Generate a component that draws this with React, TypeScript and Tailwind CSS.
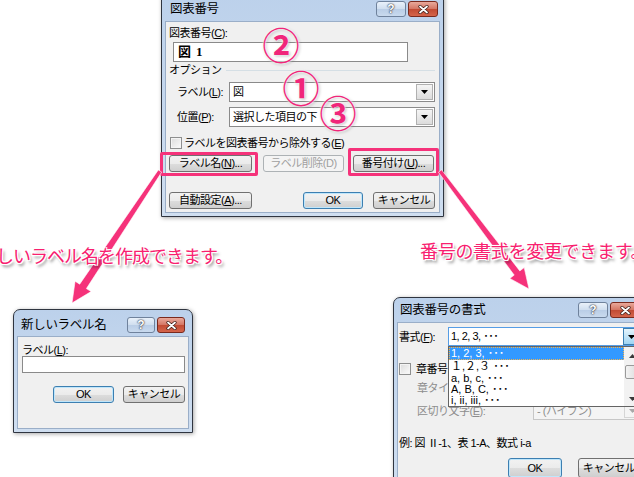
import React from 'react';

const FONT = "font-['Liberation_Sans','Noto_Sans_CJK_JP',sans-serif]";
const BTN_BG = 'bg-[linear-gradient(#f2f2f2_0%,#ebebeb_50%,#dddddd_51%,#cfcfcf_100%)]';

function HelpBtn({ className = '' }: { className?: string }) {
  return (
    <div
      className={`flex h-[16px] items-center justify-center rounded-[3px] border border-[#6f829c] bg-[linear-gradient(#e9f1fa_0%,#cfdeef_50%,#b9cde6_51%,#c9daee_100%)] text-[12px] font-bold leading-none text-white [text-shadow:0_0_1px_#223,0_0_2px_#223] ${className}`}
    >
      ?
    </div>
  );
}

function CloseBtn({ className = '' }: { className?: string }) {
  return (
    <div
      className={`flex h-[16px] items-center justify-center rounded-[3px] border border-[#7a2a1e] bg-[linear-gradient(#e9a99b_0%,#d47563_50%,#c14a33_51%,#d5654b_100%)] ${className}`}
    >
      <svg width="11" height="9" viewBox="0 0 11 9">
        <path d="M2 1.5 L9 7.5 M9 1.5 L2 7.5" stroke="#3a1a14" strokeWidth="3.2" strokeLinecap="round" />
        <path d="M2 1.5 L9 7.5 M9 1.5 L2 7.5" stroke="#fff" strokeWidth="1.8" strokeLinecap="round" />
      </svg>
    </div>
  );
}

function Dialog({
  title,
  className,
  barClass,
  btnClass,
  children,
}: {
  title: string;
  className: string;
  barClass: string;
  btnClass: string;
  children: React.ReactNode;
}) {
  return (
    <div
      className={`absolute flex flex-col rounded-t-[7px] border border-[#2f3540] bg-linear-to-b from-[#bcd1eb] to-[#cfdef0] px-[3px] pb-[3px] shadow-[1px_1px_4px_rgba(0,0,0,0.35)] ${className}`}
    >
      <div className={`flex shrink-0 items-end justify-between ${barClass}`}>
        <span className="text-[12.5px] leading-[16px] tracking-[-0.3px] text-black">{title}</span>
        <div className="flex gap-[2px]">
          <HelpBtn className={btnClass} />
          <CloseBtn className={btnClass} />
        </div>
      </div>
      <div className="relative flex-1 border border-[#9aaec8] bg-[#f0f0f0] tracking-[-0.5px]">{children}</div>
    </div>
  );
}

function Btn({
  children,
  className = '',
  def = false,
  disabled = false,
}: {
  children: React.ReactNode;
  className?: string;
  def?: boolean;
  disabled?: boolean;
}) {
  const look = disabled
    ? 'border-[#adb2b5] bg-[#f4f4f4] text-[#a0a0a0]'
    : def
      ? `border-[#3c7fb1] ${BTN_BG} shadow-[inset_0_0_0_1px_#bfe6fb]`
      : `border-[#707070] ${BTN_BG}`;
  return (
    <div
      className={`flex h-[17px] shrink-0 items-center justify-center rounded-[3px] border text-[11px] leading-none ${look} ${className}`}
    >
      {children}
    </div>
  );
}

function Arrow({ disabled = false }: { disabled?: boolean }) {
  return (
    <svg width="7" height="4" viewBox="0 0 7 4">
      <path d="M0 0 H7 L3.5 4 Z" fill={disabled ? '#a8a8a8' : '#000'} />
    </svg>
  );
}

function Combo({ text, className = '' }: { text: string; className?: string }) {
  return (
    <div className={`flex h-[20px] items-center border border-[#8a8a8a] bg-white ${className}`}>
      <span className="flex-1 pl-[3px] text-[11px] leading-none">{text}</span>
      <div className="mr-px flex h-[16px] w-[17px] items-center justify-center border border-[#b0b0b0] bg-linear-to-b from-[#f5f5f5] to-[#dcdcdc]">
        <Arrow />
      </div>
    </div>
  );
}

function Check() {
  return <div className="h-[12px] w-[12px] shrink-0 border border-[#8e8f8f] bg-linear-to-br from-[#dcdcdc] to-[#fbfbfb] shadow-[inset_0_0_0_1px_#f4f4f4]" />;
}

function Circled({ ch, className }: { ch: string; className: string }) {
  return (
    <span
      className={`absolute flex h-[40px] w-[40px] items-center justify-center text-[37px] font-bold leading-none text-[#f0267a] [text-shadow:0_0_2px_#fff,0_0_3px_#fff,1px_1px_3px_rgba(0,0,0,0.35)] ${className}`}
    >
      {ch}
    </span>
  );
}

const NOTE =
  'absolute whitespace-nowrap text-[18px] leading-none text-[#f8206f] [text-shadow:-1px_-1px_0_#fff,1px_-1px_0_#fff,-1px_1px_0_#fff,1px_1px_0_#fff,0_0_2px_#fff,2px_3px_3px_rgba(0,0,0,0.5)]';

export default function App() {
  return (
    <div className={`relative h-[477px] w-[634px] overflow-hidden bg-white text-black ${FONT}`}>
      {/* 図表番号 main dialog */}
      <Dialog
        title="図表番号"
        className="left-[161px] top-[-8px] h-[225px] w-[283px]"
        barClass="h-[28px] pb-[4px] pl-[5px] pr-[2px]"
        btnClass="w-[30px]"
      >
        <div className="flex flex-col pl-[3px] pt-[5px] text-[11px]">
          <div className="h-[12px] leading-[12px]">
            図表番号(<u>C</u>):
          </div>
          <div className="ml-[4px] mt-[3px] flex h-[20px] w-[235px] items-center border border-[#8a8a8a] bg-white pl-[4px] font-['Liberation_Serif','Noto_Sans_CJK_JP',serif] text-[13px] font-bold">
            図&nbsp;&nbsp;1
          </div>
          <div className="mt-[2px] flex h-[12px] items-center pr-[4px]">
            <span className="leading-[12px]">オプション</span>
            <div className="ml-[4px] h-px flex-1 bg-[#d5dfe5]" />
          </div>
          <div className="mt-[6px] flex items-center">
            <span className="ml-[8px] w-[52px] leading-[12px]">
              ラベル(<u>L</u>):
            </span>
            <Combo text="図" className="w-[206px]" />
          </div>
          <div className="mt-[5px] flex items-center">
            <span className="ml-[8px] w-[52px] leading-[12px]">
              位置(<u>P</u>):
            </span>
            <Combo text="選択した項目の下" className="w-[206px]" />
          </div>
          <div className="mt-[9px] flex h-[13px] items-center gap-[2px] pl-[1px]">
            <Check />
            <span className="leading-[12px]">
              ラベルを図表番号から除外する(<u>E</u>)
            </span>
          </div>
          <div className="mt-[6px] flex">
            <Btn className="w-[83px]">
              ラベル名(<u>N</u>)...
            </Btn>
            <Btn className="ml-[11px] w-[81px]" disabled>
              ラベル削除(D)
            </Btn>
            <Btn className="ml-[9px] w-[81px]">
              番号付け(<u>U</u>)...
            </Btn>
          </div>
          <div className="mt-[20px] flex">
            <Btn className="w-[83px]">
              自動設定(<u>A</u>)...
            </Btn>
            <Btn className="ml-[51px] w-[60px]" def>
              OK
            </Btn>
            <Btn className="ml-[10px] w-[62px]">キャンセル</Btn>
          </div>
        </div>
      </Dialog>

      {/* 新しいラベル名 dialog */}
      <Dialog
        title="新しいラベル名"
        className="left-[13px] top-[309px] h-[124px] w-[180px]"
        barClass="h-[26px] pb-[3px] pl-[4px] pr-[4px]"
        btnClass="w-[28px] h-[15px]"
      >
        <div className="flex flex-col pl-[4px] pt-[7px] text-[11px]">
          <div className="h-[12px] leading-[12px]">
            ラベル(<u>L</u>):
          </div>
          <div className="h-[17px] w-[163px] border border-[#8a8a8a] bg-white" />
          <div className="mt-[13px] flex">
            <Btn className="ml-[31px] w-[61px]" def>
              OK
            </Btn>
            <Btn className="ml-[9px] w-[62px]">キャンセル</Btn>
          </div>
        </div>
      </Dialog>

      {/* 図表番号の書式 dialog */}
      <Dialog
        title="図表番号の書式"
        className="left-[393px] top-[297px] h-[200px] w-[255px]"
        barClass="h-[24px] pb-[4px] pl-[3px] pr-[4px]"
        btnClass="w-[30px] h-[15px]"
      >
        <div className="flex flex-col whitespace-nowrap pl-[1px] pt-[4px] text-[11px]">
          <div className="flex items-center">
            <span className="w-[49px] leading-[12px]">
              書式(<u>F</u>):
            </span>
            <div className="flex h-[19px] w-[193px] items-center border border-[#569de5] bg-white">
              <span className="flex-1 pl-[2px] leading-none">1, 2, 3, ･･･</span>
              <div className="flex h-[17px] w-[17px] items-center justify-center border border-[#3c7fb1] bg-linear-to-b from-[#e5f4fc] to-[#9fd5f3]">
                <Arrow />
              </div>
            </div>
          </div>
          <div className="mt-[17px] flex h-[12px] items-center gap-[5px]">
            <Check />
            <span className="leading-[12px]">
              章番号を含める(<u>N</u>)
            </span>
          </div>
          <div className="mt-[4px] flex items-center text-[#8d8d8d]">
            <span className="ml-[18px] w-[116px] leading-[12px]">章タイトルのスタイル(P):</span>
            <div className="flex h-[18px] w-[110px] items-center border border-[#c7c7c7] bg-[#f4f4f4]">
              <span className="flex-1 pl-[3px]">見出し 1</span>
            </div>
          </div>
          <div className="mt-[5px] flex items-center text-[#8d8d8d]">
            <span className="ml-[18px] w-[116px] leading-[12px]">
              区切り文字(<u>E</u>):
            </span>
            <div className="flex h-[18px] w-[110px] items-center border border-[#c7c7c7] bg-[#f4f4f4]">
              <span className="flex-1 pl-[3px]">- (ハイフン)</span>
              <div className="mr-px flex h-[14px] w-[17px] items-center justify-center border border-[#d5d5d5] bg-[#f4f4f4]">
                <Arrow disabled />
              </div>
            </div>
          </div>
          <div className="mt-[17px] h-[12px] leading-[12px]">例: 図 Ⅱ-1、表 1-A、数式 i-a</div>
          <div className="mt-[9px] flex">
            <Btn className="ml-[109px] h-[20px] w-[54px]" def>
              OK
            </Btn>
            <Btn className="ml-[16px] h-[20px] w-[62px]">キャンセル</Btn>
          </div>
        </div>

        {/* open dropdown list */}
        <div className="absolute left-[50px] top-[23px] flex h-[61px] w-[194px] border border-[#646464] bg-white text-[11px] tracking-normal">
          <div className="flex flex-1 flex-col leading-[12px]">
            <div className="h-[13px] border border-dotted border-[#f3b34c] bg-[#3399ff] pl-[1px] leading-[11px] text-white">1, 2, 3, ･･･</div>
            <div className="h-[13px] pl-[2px] leading-[13px]">１,２,３ ･･･</div>
            <div className="h-[11px] pl-[2px] leading-[11px]">a, b, c, ･･･</div>
            <div className="h-[11px] pl-[2px] leading-[11px]">A, B, C, ･･･</div>
            <div className="h-[11px] pl-[2px] leading-[10px]">i, ii, iii, ･･･</div>
          </div>
          <div className="flex w-[17px] flex-col items-center bg-[#f2f2f2]">
            <div className="flex h-[18px] items-center">
              <svg width="7" height="4" viewBox="0 0 7 4">
                <path d="M0 4 H7 L3.5 0 Z" fill="#3a3a3a" />
              </svg>
            </div>
            <div className="h-[14px] w-[15px] rounded-[2px] border border-[#9a9a9a] bg-linear-to-r from-[#f3f3f3] to-[#dadada]" />
            <div className="flex-1" />
            <div className="flex h-[14px] items-center">
              <svg width="7" height="4" viewBox="0 0 7 4">
                <path d="M0 0 H7 L3.5 4 Z" fill="#3a3a3a" />
              </svg>
            </div>
          </div>
        </div>
      </Dialog>

      {/* pink highlight boxes */}
      <div className="absolute left-[160px] top-[152px] h-[24px] w-[98px] rounded-[2px] border-[3px] border-[#f5327a]" />
      <div className="absolute left-[348px] top-[148px] h-[28px] w-[91px] rounded-[2px] border-[3px] border-[#f5327a]" />

      {/* circled numbers */}
      <Circled ch="②" className="left-[261px] top-[27px]" />
      <Circled ch="①" className="left-[281px] top-[70px]" />
      <Circled ch="③" className="left-[318px] top-[95px]" />

      {/* arrows */}
      <svg className="pointer-events-none absolute left-0 top-0" width="634" height="477" viewBox="0 0 634 477">
        <g fill="#f5327a" stroke="#fff" strokeWidth="0.6">
          <polygon points="161.7,172.1 86.4,288.6 91.1,291.6 72,303 75.1,281.2 79.7,284.2 158.3,169.9" />
          <polygon points="438.4,172.2 514.2,275.1 509.8,278.4 529,289 524.2,267.6 519.8,270.9 441.6,169.8" />
        </g>
      </svg>

      {/* notes */}
      <div className={`${NOTE} left-[-21px] top-[248px] tracking-[-1px]`}>新しいラベル名を作成できます。</div>
      <div className={`${NOTE} left-[420px] top-[243px] tracking-[-0.3px]`}>番号の書式を変更できます。</div>
    </div>
  );
}
